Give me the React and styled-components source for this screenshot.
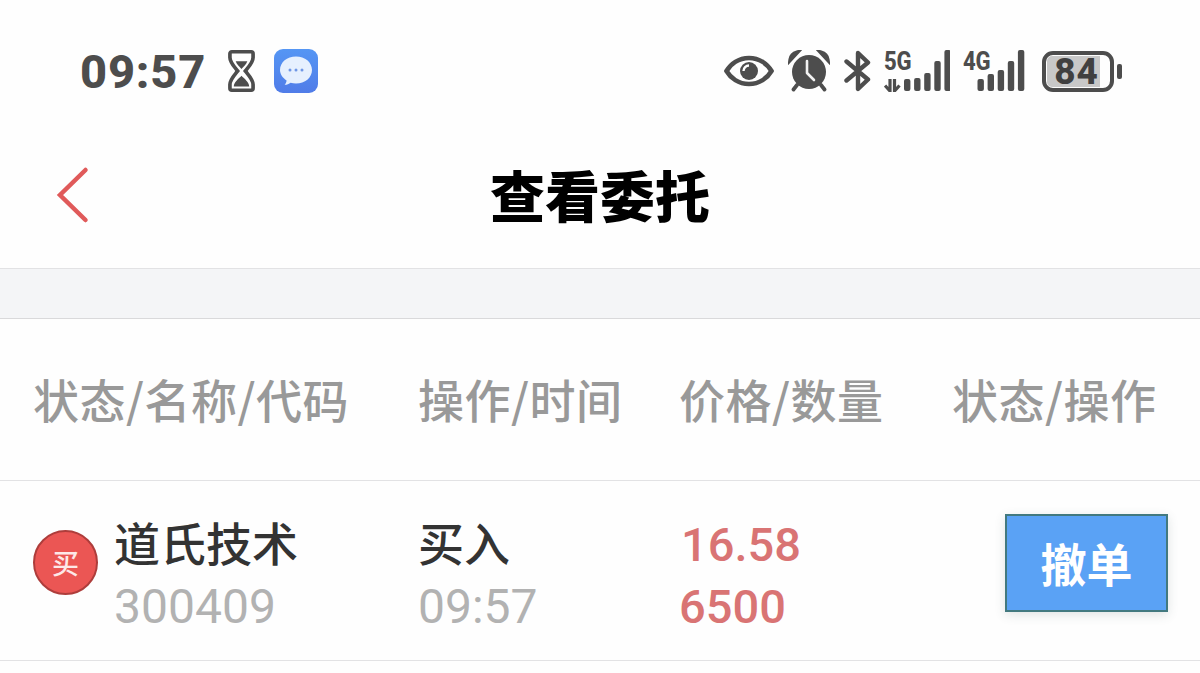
import React from "react";
import styled, { createGlobalStyle } from "styled-components";

const CJK = `Roboto, "Noto Sans CJK SC", sans-serif`;

const GlobalStyle = createGlobalStyle`
  html, body {
    margin: 0;
    padding: 0;
    background: #fff;
    overflow: hidden;
  }
  body {
    font-family: ${CJK};
  }
`;

const Page = styled.div`
  width: 1200px;
  height: 673px;
  background: #fefefe;
  overflow: hidden;
`;

const StatusBar = styled.div`
  height: 142px;
  display: flex;
  align-items: center;
  justify-content: space-between;
  padding: 0 78px 0 80px;
  color: #4d4d4d;
`;

const StatusGroup = styled.div`
  display: flex;
  align-items: center;
`;

const Clock = styled.span`
  font-family: Roboto, sans-serif;
  font-size: 47px;
  font-weight: 800;
  letter-spacing: 0.8px;
  line-height: 1;
  margin-right: 22px;
`;

const Icon = styled.svg`
  display: block;
  flex: none;
  margin-left: ${props => props.$gap || 0}px;
`;

const NetLabel = styled.div`
  display: flex;
  align-items: flex-end;
  margin-left: ${props => props.$gap || 0}px;
  position: relative;
  width: ${props => props.$width}px;
  height: 42px;
`;

const NetText = styled.span`
  position: absolute;
  left: 0;
  top: -1px;
  font-family: Roboto, sans-serif;
  font-size: 26px;
  font-weight: 800;
  line-height: 24px;
  letter-spacing: -0.4px;
  transform: scaleX(0.85);
  transform-origin: left top;
`;

const Battery = styled.div`
  display: flex;
  align-items: center;
  margin-left: 17px;
`;

const BatteryBody = styled.div`
  position: relative;
  width: 72px;
  height: 41px;
  box-sizing: border-box;
  border: 4px solid #4d4d4d;
  border-radius: 11px;
  padding: 1px;
  display: flex;
`;

const BatteryFill = styled.div`
  flex: none;
  width: 86%;
  background: #c8c8c8;
  border-radius: 5px 0 0 5px;
`;

const BatteryText = styled.span`
  position: absolute;
  inset: 0;
  display: flex;
  align-items: center;
  justify-content: center;
  font-family: Roboto, sans-serif;
  font-size: 37px;
  font-weight: 800;
  letter-spacing: 1px;
  color: #404040;
  padding-right: 3px;
`;

const BatteryCap = styled.div`
  width: 5px;
  height: 15px;
  margin-left: 3px;
  border-radius: 2px;
  background: #4d4d4d;
`;

const NavBar = styled.div`
  position: relative;
  height: 127px;
  display: flex;
  align-items: center;
  justify-content: center;
  border-bottom: 1px solid #e2e2e4;
  padding-bottom: 14px;
  box-sizing: border-box;
`;

const BackButton = styled.svg`
  position: absolute;
  left: 52px;
  top: 23px;
`;

const Title = styled.h1`
  margin: 0;
  font-size: 55px;
  font-weight: 900;
  color: #000;
  line-height: 1;
`;

const Divider = styled.div`
  height: 49px;
  background: #f4f5f7;
  border-bottom: 1px solid #d9d9db;
`;

const TableRow = styled.div`
  display: grid;
  grid-template-columns: 418px 261px 273px 1fr;
  align-items: center;
  border-bottom: 1px solid #e2e2e4;
  box-sizing: border-box;
  height: ${props => props.$height}px;
`;

const HeadCell = styled.div`
  font-family: "Noto Sans CJK SC", sans-serif;
  font-size: 46px;
  font-weight: 500;
  letter-spacing: 0.5px;
  color: #999;
  line-height: 1;
  white-space: nowrap;
  padding-left: ${props => props.$indent || 0}px;
  padding-bottom: 4px;
`;

const NameCell = styled.div`
  display: flex;
  align-items: center;
  padding-left: 33px;
`;

const SideBadge = styled.div`
  width: 65px;
  height: 65px;
  box-sizing: border-box;
  border-radius: 50%;
  background: #eb5654;
  border: 2px solid #ae3d3b;
  color: #fde8e8;
  font-size: 27px;
  font-weight: 500;
  display: flex;
  align-items: center;
  justify-content: center;
  margin-right: 16px;
  margin-bottom: 16px;
`;

const Stack = styled.div`
  display: flex;
  flex-direction: column;
  gap: 12px;
  padding-top: 11px;
`;

const Primary = styled.div`
  font-size: 46px;
  font-weight: 500;
  line-height: 50px;
  color: #333;
  white-space: nowrap;
`;

const Secondary = styled.div`
  font-family: Roboto, sans-serif;
  font-size: 48px;
  line-height: 50px;
  color: #b2b2b2;
`;

const Price = styled.div`
  font-family: Roboto, sans-serif;
  font-size: 47px;
  font-weight: 500;
  line-height: 50px;
  color: #d97474;
  padding-left: ${props => props.$indent || 0}px;
`;

const ActionCell = styled.div`
  padding-left: 53px;
  padding-bottom: 15px;
`;

const CancelButton = styled.button`
  display: flex;
  align-items: center;
  justify-content: center;
  width: 163px;
  height: 98px;
  padding: 0 0 2px;
  box-sizing: border-box;
  border: 2px solid #42797f;
  border-radius: 0;
  background: #5aa2f5;
  color: #fff;
  font-family: ${CJK};
  font-size: 46px;
  font-weight: 700;
  box-shadow: 0 3px 10px rgba(60, 90, 90, 0.16);
`;

const Hourglass = () => (
  <Icon width="27" height="44" viewBox="0 0 28 44" fill="none">
    <path
      d="M4 2h20a2 2 0 0 1 2 2v4c0 5-4 9-8 14 4 5 8 9 8 14v4a2 2 0 0 1-2 2H4a2 2 0 0 1-2-2v-4c0-5 4-9 8-14C6 17 2 13 2 8V4a2 2 0 0 1 2-2z"
      stroke="#4d4d4d"
      strokeWidth="3.800"
    />
    <path d="M8 12h12c-1 3-4 6-6 8-2-2-5-5-6-8z" fill="#4d4d4d" />
    <path d="M6 38c0-4 5-8 8-11 3 3 8 7 8 11z" fill="#4d4d4d" />
  </Icon>
);

const MessageApp = () => (
  <Icon $gap={19} width="44" height="44" viewBox="0 0 44 44">
    <defs>
      <linearGradient id="appBg" x1="0" y1="0" x2="0" y2="1">
        <stop offset="0" stopColor="#5596f4" />
        <stop offset="1" stopColor="#507ce8" />
      </linearGradient>
    </defs>
    <rect width="44" height="44" rx="9" fill="url(#appBg)" />
    <path
      d="M22 7.500c9 0 16 5.800 16 13.500S31 34.500 22 34.500c-2 0-3.800-.3-5.400-.8-1.500 1.300-3.700 2-6 2.100 1-1.200 1.800-2.700 2-4.400C8.800 29 6 25.300 6 21 6 13.300 13 7.500 22 7.500z"
      fill="#e6f0fe"
    />
    <circle cx="16" cy="21" r="1.500" fill="#6f97e6" />
    <circle cx="22" cy="21" r="1.500" fill="#6f97e6" />
    <circle cx="28" cy="21" r="1.500" fill="#6f97e6" />
  </Icon>
);

const Eye = () => (
  <Icon width="50" height="32" viewBox="0 0 50 32">
    <path
      d="M25 3C14.500 3 6.500 9 2.500 16c4 7 12 13 22.500 13s18.500-6 22.500-13C43.500 9 35.500 3 25 3z"
      fill="none"
      stroke="#4d4d4d"
      strokeWidth="4.600"
    />
    <circle cx="25" cy="16" r="9" fill="#4d4d4d" />
    <path d="M19.500 16a5.500 5.500 0 0 1 5.500-5.500" stroke="#fefefe" strokeWidth="2.400" fill="none" />
  </Icon>
);

const Alarm = () => (
  <Icon $gap={14} width="42" height="42" viewBox="0 0 42 42">
    <path d="M2.500 9.500C3 6 5.500 3.500 9 2.500L2.500 9.500zM39.500 9.500C39 6 36.500 3.500 33 2.500L39.500 9.500z" stroke="#4d4d4d" strokeWidth="4.200" strokeLinecap="round" fill="#4d4d4d" />
    <path d="M9 35l-3.500 4.500M33 35l3.500 4.500" stroke="#4d4d4d" strokeWidth="3.800" strokeLinecap="round" />
    <circle cx="21" cy="22" r="17" fill="#4d4d4d" />
    <path d="M19 11v12l7 7" stroke="#f2f2f2" strokeWidth="2.600" fill="none" strokeLinecap="round" strokeLinejoin="round" />
  </Icon>
);

const Bluetooth = () => (
  <Icon $gap={14} width="28" height="42" viewBox="0 0 28 42" fill="none">
    <path
      d="M2.500 11.500L24 29.500 14 39V3l10 9.500L2.500 30.500"
      stroke="#4d4d4d"
      strokeWidth="4.400"
      strokeLinejoin="round"
      strokeLinecap="round"
    />
  </Icon>
);

const SignalBars = ({ bars, x }) => (
  <>
    {bars.map((h, i) => (
      <rect
        key={i}
        x={x + i * 10.1}
        y={41 - h}
        width="6.400"
        height={h}
        rx="2"
        fill="#4d4d4d"
      />
    ))}
  </>
);

const Signal5G = () => (
  <NetLabel $gap={12} $width={66}>
    <NetText>5G</NetText>
    <Icon width="66" height="42" viewBox="0 0 66 42">
      <path d="M6 29v12L1 35.500M10.500 29v12l5-5.500" stroke="#4d4d4d" strokeWidth="3.200" fill="none" />
      <SignalBars bars={[12, 13, 18, 30, 41]} x={20} />
    </Icon>
  </NetLabel>
);

const Signal4G = () => (
  <NetLabel $gap={13} $width={62}>
    <NetText>4G</NetText>
    <Icon width="62" height="42" viewBox="0 0 62 42">
      <SignalBars bars={[12, 17, 21, 30, 41]} x={14.500} />
    </Icon>
  </NetLabel>
);

const order = {
  side: "买",
  name: "道氏技术",
  code: "300409",
  action: "买入",
  time: "09:57",
  price: "16.58",
  amount: "6500"
};

const App = () => {
  return (
    <Page>
      <GlobalStyle />
      <StatusBar>
        <StatusGroup>
          <Clock>09:57</Clock>
          <Hourglass />
          <MessageApp />
        </StatusGroup>
        <StatusGroup>
          <Eye />
          <Alarm />
          <Bluetooth />
          <Signal5G />
          <Signal4G />
          <Battery>
            <BatteryBody>
              <BatteryFill />
              <BatteryText>84</BatteryText>
            </BatteryBody>
            <BatteryCap />
          </Battery>
        </StatusGroup>
      </StatusBar>
      <NavBar>
        <BackButton width="40" height="60" viewBox="0 0 40 60" fill="none">
          <path
            d="M33.500 5L8 30l25.500 25"
            stroke="#e05a5a"
            strokeWidth="4.500"
            strokeLinecap="round"
            strokeLinejoin="miter"
          />
        </BackButton>
        <Title>查看委托</Title>
      </NavBar>
      <Divider />
      <TableRow $height={162}>
        <HeadCell $indent={33}>状态/名称/代码</HeadCell>
        <HeadCell>操作/时间</HeadCell>
        <HeadCell>价格/数量</HeadCell>
        <HeadCell>状态/操作</HeadCell>
      </TableRow>
      <TableRow $height={180}>
        <NameCell>
          <SideBadge>{order.side}</SideBadge>
          <Stack>
            <Primary>{order.name}</Primary>
            <Secondary>{order.code}</Secondary>
          </Stack>
        </NameCell>
        <Stack>
          <Primary>{order.action}</Primary>
          <Secondary>{order.time}</Secondary>
        </Stack>
        <Stack>
          <Price $indent={2}>{order.price}</Price>
          <Price>{order.amount}</Price>
        </Stack>
        <ActionCell>
          <CancelButton>撤单</CancelButton>
        </ActionCell>
      </TableRow>
    </Page>
  );
};

export default App;
